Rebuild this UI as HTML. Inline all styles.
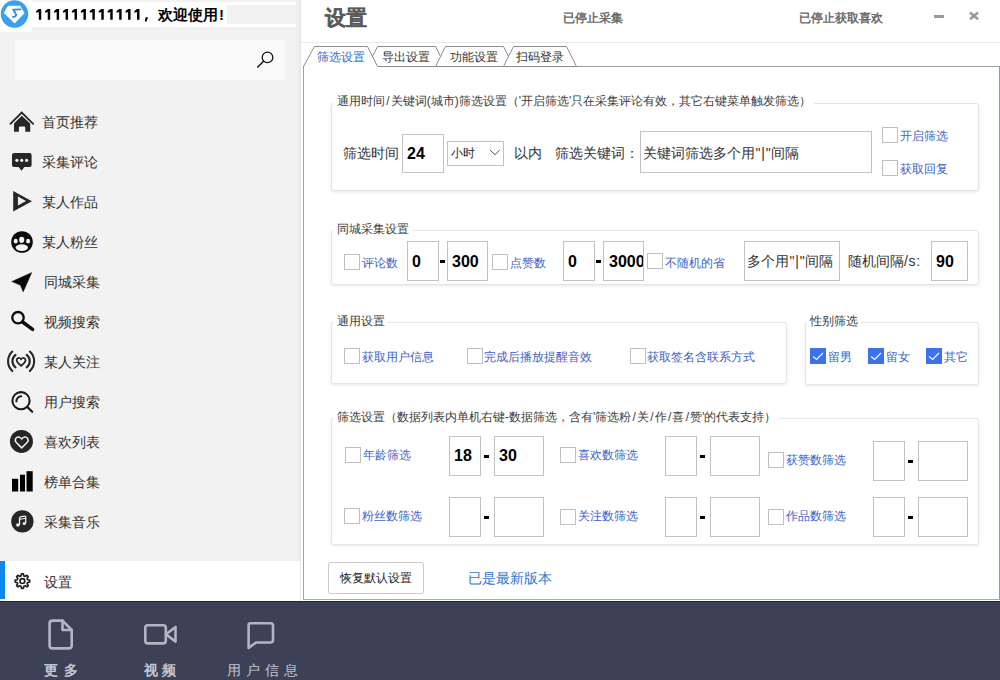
<!DOCTYPE html>
<html><head><meta charset="utf-8">
<style>
*{margin:0;padding:0;box-sizing:border-box}
html,body{width:1000px;height:680px;overflow:hidden;background:#fff;font-family:"Liberation Sans",sans-serif;}
.a{position:absolute}
.t{position:absolute;white-space:nowrap;line-height:1}
#side{position:absolute;left:0;top:0;width:300px;height:601px;background:#f2f2f2}
#sideline{position:absolute;left:300px;top:0;width:1px;height:601px;background:#e4e4e4}
.mi{position:absolute;left:0;width:300px;height:40px}
.mt{position:absolute;font-size:14px;color:#333;line-height:14px;white-space:nowrap}
#bottom{position:absolute;left:0;top:601px;width:1000px;height:79px;background:#3d4156}
.bt{position:absolute;font-size:14px;color:#c4c6d0;line-height:14px;white-space:nowrap;font-weight:bold}
.sec{position:absolute;border:1px solid #e6e6e6;border-radius:3px;box-shadow:0 1px 3px rgba(0,0,0,0.10);background:#fff}
.st{position:absolute;font-size:12px;color:#3c3c3c;line-height:12px;white-space:nowrap;background:#fff;padding:0 3px}
.lbl{position:absolute;font-size:14px;color:#333;line-height:14px;white-space:nowrap}
.inp{position:absolute;border:1px solid #c2c2c2;background:#fff}
.num{position:absolute;font-size:16px;font-weight:bold;color:#000;line-height:16px;white-space:nowrap}
.cb{position:absolute;width:16px;height:16px;border:1px solid #c0c0c0;background:#fff}
.cbl{position:absolute;font-size:12px;color:#4163c8;line-height:12px;white-space:nowrap;margin-top:1px}
.dash{position:absolute;width:5px;height:2.5px;background:#000}
</style></head><body>
<div id="side"></div>
<div id="sideline"></div>
<div class="a" style="left:295px;top:0px;width:5px;height:561px;background:linear-gradient(to right,rgba(0,0,0,0),rgba(0,0,0,0.025))"></div>
<!-- header band -->
<div class="a" style="left:0;top:0;width:32px;height:32px;background:#fff"></div>
<div class="a" style="left:32px;top:2px;width:264px;height:3px;background:#fff"></div>
<div class="a" style="left:32px;top:24px;width:264px;height:3px;background:#fff"></div>
<div class="a" style="left:32px;top:5px;width:195px;height:19px;background:#fff"></div>
<svg class="a" style="left:0;top:0" width="30" height="30" viewBox="0 0 30 30">
<circle cx="14.5" cy="14" r="13.7" fill="#3aa0ee"/>
<path d="M4.5 12.8 L8.4 6.3 L19.8 6.3 L23.8 13 L14.6 22.6 Z" fill="#fff" stroke="#fff" stroke-width="1.2" stroke-linejoin="round"/>
<path d="M20.6 9.4 L13.2 9.6 L15.6 13.6 Q17 15.6 14.6 16.6 L13 17" fill="none" stroke="#2f8fe0" stroke-width="1.9" stroke-linejoin="round" stroke-linecap="round"/>
</svg>
<svg class="a" style="left:0;top:0" width="160" height="30" viewBox="0 0 160 30"><path d="M38.80 9.05 L41.25 9.05 L41.25 19.8 L38.80 19.8 L38.80 12.1 L36.20 12.7 L36.20 10.9 Z M47.73 9.05 L50.18 9.05 L50.18 19.8 L47.73 19.8 L47.73 12.1 L45.13 12.7 L45.13 10.9 Z M56.66 9.05 L59.11 9.05 L59.11 19.8 L56.66 19.8 L56.66 12.1 L54.06 12.7 L54.06 10.9 Z M65.59 9.05 L68.04 9.05 L68.04 19.8 L65.59 19.8 L65.59 12.1 L62.99 12.7 L62.99 10.9 Z M74.52 9.05 L76.97 9.05 L76.97 19.8 L74.52 19.8 L74.52 12.1 L71.92 12.7 L71.92 10.9 Z M83.45 9.05 L85.90 9.05 L85.90 19.8 L83.45 19.8 L83.45 12.1 L80.85 12.7 L80.85 10.9 Z M92.38 9.05 L94.83 9.05 L94.83 19.8 L92.38 19.8 L92.38 12.1 L89.78 12.7 L89.78 10.9 Z M101.31 9.05 L103.76 9.05 L103.76 19.8 L101.31 19.8 L101.31 12.1 L98.71 12.7 L98.71 10.9 Z M110.24 9.05 L112.69 9.05 L112.69 19.8 L110.24 19.8 L110.24 12.1 L107.64 12.7 L107.64 10.9 Z M119.17 9.05 L121.62 9.05 L121.62 19.8 L119.17 19.8 L119.17 12.1 L116.57 12.7 L116.57 10.9 Z M128.10 9.05 L130.55 9.05 L130.55 19.8 L128.10 19.8 L128.10 12.1 L125.50 12.7 L125.50 10.9 Z M137.03 9.05 L139.48 9.05 L139.48 19.8 L137.03 19.8 L137.03 12.1 L134.43 12.7 L134.43 10.9 Z" fill="#000"/>
<path d="M145.6 17.2 L148 17.2 L146.6 21.6 L144.8 21.6 Z" fill="#000"/></svg>
<div class="t" style="left:158px;top:7px;font-size:15px;font-weight:bold;color:#000">欢迎使用<span style="font-size:15px;margin-left:1px">!</span></div>
<!-- search -->
<div class="a" style="left:15px;top:40px;width:270px;height:40px;background:#fafafa"></div>
<svg class="a" style="left:250px;top:45px" width="30" height="30" viewBox="0 0 30 30">
<circle cx="17.5" cy="12.4" r="5.3" fill="none" stroke="#111" stroke-width="1.3"/>
<line x1="13.8" y1="16.1" x2="7.3" y2="22.6" stroke="#111" stroke-width="1.4"/>
</svg>

<!-- menu icons -->
<svg class="a" style="left:0;top:100px" width="40" height="440" viewBox="0 100 40 440">
<!-- home -->
<path d="M10.4 123.9 L21.7 112.6 L33.2 123.9" fill="none" stroke="#262626" stroke-width="1.8" stroke-linecap="round" stroke-linejoin="miter"/>
<path d="M14 131.8 L14 123.5 L21.7 115.8 L30.2 123.5 L30.2 131.8 L25.3 131.8 L25.3 127.8 Q25.3 126.6 24.1 126.6 L20.1 126.6 Q18.9 126.6 18.9 127.8 L18.9 131.8 Z" fill="#262626"/>
<!-- comment -->
<path d="M14 152.9 L29.6 152.9 Q31.6 152.9 31.6 154.9 L31.6 165.1 Q31.6 167.1 29.6 167.1 L24.4 167.1 L21.5 170.8 L18.6 167.1 L14 167.1 Q12 167.1 12 165.1 L12 154.9 Q12 152.9 14 152.9 Z" fill="#262626"/>
<circle cx="16.9" cy="160.3" r="1.6" fill="#f2f2f2"/><circle cx="21.7" cy="160.3" r="1.6" fill="#f2f2f2"/><circle cx="26.6" cy="160.3" r="1.6" fill="#f2f2f2"/>
<!-- play -->
<path d="M13.2 190.9 L32 201.2 L13.2 211.5 Z M17.9 196.6 L17.9 205.5 L26 201 Z" fill="#262626" fill-rule="evenodd"/>
<!-- paw -->
<circle cx="22" cy="242" r="10.8" fill="#0a0a0a"/>
<ellipse cx="15.7" cy="241.2" rx="2" ry="2.4" fill="#f2f2f2"/><ellipse cx="21.7" cy="239.8" rx="2.6" ry="3.1" fill="#f2f2f2"/><ellipse cx="28.1" cy="241.2" rx="2" ry="2.4" fill="#f2f2f2"/>
<ellipse cx="21.8" cy="247.6" rx="6.2" ry="3.3" fill="#f2f2f2"/>
<!-- nav arrow -->
<path d="M11.7 281.6 L31.8 272.5 L23.2 292 L20.4 285.2 Z" fill="#0a0a0a" stroke="#0a0a0a" stroke-width="0.4" stroke-linejoin="round"/>
<!-- search -->
<circle cx="18" cy="317.7" r="5.7" fill="none" stroke="#0a0a0a" stroke-width="2.3"/>
<line x1="22.6" y1="322" x2="32.6" y2="329.4" stroke="#0a0a0a" stroke-width="3.5" stroke-linecap="round"/>
<!-- broadcast heart -->
<g fill="none" stroke="#262626" stroke-width="2.1" stroke-linecap="round">
<path d="M12.3 351.6 A13.2 13.2 0 0 0 12.3 371"/>
<path d="M29.9 351.6 A13.2 13.2 0 0 1 29.9 371"/>
<path d="M15.5 354.8 A8 8 0 0 0 15.5 367.4"/>
<path d="M26.7 354.8 A8 8 0 0 1 26.7 367.4"/>
</g>
<path d="M21.1 365.9 L17.7 362.6 Q16.2 360.8 16.9 359.1 Q18 357.6 19.6 358 Q20.5 358.3 21.1 359.3 Q21.7 358.3 22.6 358 Q24.2 357.6 25.3 359.1 Q26 360.8 24.5 362.6 Z" fill="none" stroke="#262626" stroke-width="1.8" stroke-linejoin="round"/>
<!-- user search -->
<circle cx="21" cy="400.7" r="8.6" fill="none" stroke="#1a1a1a" stroke-width="2.1"/>
<path d="M16.4 401.4 A5 5 0 0 1 21.2 396.2" fill="none" stroke="#1a1a1a" stroke-width="2" stroke-linecap="round"/>
<line x1="27.4" y1="407.1" x2="32.2" y2="411.8" stroke="#1a1a1a" stroke-width="2.2" stroke-linecap="round"/>
<!-- heart circle -->
<circle cx="21.45" cy="441.45" r="11.5" fill="#262626"/>
<path d="M21.7 447.9 L16.3 442.5 Q14.6 440.6 15.6 438.6 Q17 436.7 19.2 437.1 Q20.6 437.5 21.7 439 Q22.8 437.5 24.2 437.1 Q26.4 436.7 27.8 438.6 Q28.8 440.6 27.1 442.5 Z" fill="none" stroke="#f2f2f2" stroke-width="1.5" stroke-linejoin="round"/>
<!-- bars -->
<rect x="12" y="478.8" width="6.2" height="12.7" fill="#000"/>
<rect x="20" y="474.7" width="5" height="16.8" fill="#000"/>
<rect x="26.5" y="471.2" width="6.2" height="20.3" fill="#000"/>
<!-- music -->
<circle cx="22.35" cy="521.35" r="11.2" fill="#262626"/>
<path d="M19.5 525 L19.5 518.2 Q19.5 517 20.7 516.8 L24.5 516.1 Q25.7 515.9 25.7 517.1 L25.7 523.6" fill="none" stroke="#f2f2f2" stroke-width="1.3"/>
<path d="M19.5 519.4 L25.7 518.3" fill="none" stroke="#f2f2f2" stroke-width="1"/>
<circle cx="17.9" cy="525" r="1.8" fill="#f2f2f2"/><circle cx="24.2" cy="523.6" r="1.6" fill="#f2f2f2"/>
</svg>
<div class="mt" style="left:42px;top:115px">首页推荐</div>
<div class="mt" style="left:42px;top:155px">采集评论</div>
<div class="mt" style="left:42px;top:195px">某人作品</div>
<div class="mt" style="left:42px;top:235px">某人粉丝</div>
<div class="mt" style="left:44px;top:275px">同城采集</div>
<div class="mt" style="left:44px;top:315px">视频搜索</div>
<div class="mt" style="left:44px;top:355px">某人关注</div>
<div class="mt" style="left:44px;top:395px">用户搜索</div>
<div class="mt" style="left:44px;top:435px">喜欢列表</div>
<div class="mt" style="left:44px;top:475px">榜单合集</div>
<div class="mt" style="left:44px;top:515px">采集音乐</div>
<!-- settings active -->
<div class="a" style="left:0;top:561px;width:300px;height:40px;background:#fff"></div>
<div class="a" style="left:0;top:561px;width:5px;height:38px;background:#0f87f0"></div>
<svg class="a" style="left:0;top:560px" width="40" height="40" viewBox="0 560 40 40">
<path d="M29.64 580.13 L29.64 582.07 L27.62 582.48 L27.07 583.81 L28.20 585.53 L26.83 586.90 L25.11 585.77 L23.78 586.32 L23.37 588.34 L21.43 588.34 L21.02 586.32 L19.69 585.77 L17.97 586.90 L16.60 585.53 L17.73 583.81 L17.18 582.48 L15.16 582.07 L15.16 580.13 L17.18 579.72 L17.73 578.39 L16.60 576.67 L17.97 575.30 L19.69 576.43 L21.02 575.88 L21.43 573.86 L23.37 573.86 L23.78 575.88 L25.11 576.43 L26.83 575.30 L28.20 576.67 L27.07 578.39 L27.62 579.72 Z" fill="none" stroke="#222" stroke-width="1.7" stroke-linejoin="round"/>
<circle cx="22.4" cy="581.1" r="2.4" fill="none" stroke="#222" stroke-width="1.7"/>
</svg>
<div class="mt" style="left:44px;top:575px">设置</div>


<!-- right header -->
<div class="a" style="left:301px;top:42px;width:699px;height:1px;background:#ebebeb"></div>
<div class="t" style="left:325px;top:7px;font-size:21px;font-weight:bold;color:#5a5a5a;-webkit-text-stroke:0.2px #5a5a5a">设置</div>
<div class="t" style="left:563px;top:12px;font-size:12px;font-weight:bold;color:#6a6a6a">已停止采集</div>
<div class="t" style="left:799px;top:12px;font-size:12px;font-weight:bold;color:#6a6a6a">已停止获取喜欢</div>
<div class="a" style="left:934px;top:15px;width:10px;height:3px;background:#9a9a9a"></div>
<svg class="a" style="left:966px;top:9px" width="16" height="14" viewBox="0 0 16 14">
<path d="M3.9 3.5 L12.1 10.2 M12.1 3.5 L3.9 10.2" stroke="#9a9a9a" stroke-width="2.4"/>
</svg>
<!-- content box -->
<div class="a" style="left:303px;top:66px;width:697px;height:534px;border:1px solid;border-color:#999da1 #8f98a4 #a6aaae #a0a4a8;background:#fff"></div>
<!-- tabs -->
<svg class="a" style="left:300px;top:40px" width="300" height="30" viewBox="300 40 300 30">
<g fill="#fff" stroke="#8a8e92" stroke-width="1">
<path d="M367.5 66.5 L377.5 46.5 L435.5 46.5 L445.5 66.5 Z"/>
<path d="M435.5 66.5 L445.5 46.5 L503.5 46.5 L513.5 66.5 Z"/>
<path d="M503.5 66.5 L513.5 46.5 L566.5 46.5 L576.5 66.5 Z"/>
</g>
<path d="M304 67.4 L304 66 L314.5 46.5 L367.5 46.5 L378 67.4 Z" fill="#fff" stroke="none"/>
<path d="M303.5 68 L303.5 66.5 L314.5 46.5 L367.5 46.5 L377.5 66.5" fill="none" stroke="#8a8e92" stroke-width="1"/>
</svg>
<div class="t" style="left:317px;top:51px;font-size:12px;color:#2a70c4">筛选设置</div>
<div class="t" style="left:382px;top:51px;font-size:12px;color:#333">导出设置</div>
<div class="t" style="left:450px;top:51px;font-size:12px;color:#333">功能设置</div>
<div class="t" style="left:516px;top:51px;font-size:12px;color:#333">扫码登录</div>

<!-- section 1 -->
<div class="sec" style="left:331px;top:103px;width:648px;height:88px"></div>
<div class="st" style="left:334px;top:95px">通用时间<span style="margin:0 1.2px">/</span>关键词(城市)筛选设置（'开启筛选'只在采集评论有效，其它右键菜单触发筛选）</div>
<div class="lbl" style="left:343px;top:146px">筛选时间</div>
<div class="inp" style="left:402px;top:134px;width:42px;height:39px"></div>
<div class="num" style="left:407px;top:146px">24</div>
<div class="inp" style="left:447px;top:141px;width:57px;height:25px"></div>
<div class="lbl" style="left:451px;top:146px;font-size:12px;color:#222">小时</div>
<svg class="a" style="left:488px;top:147px" width="14" height="10" viewBox="0 0 14 10"><path d="M2 3 L7 7.7 L11.8 3" fill="none" stroke="#555" stroke-width="1"/></svg>
<div class="lbl" style="left:514px;top:146px">以内</div>
<div class="lbl" style="left:555px;top:146px">筛选关键词：</div>
<div class="inp" style="left:640px;top:131px;width:232px;height:42px"></div>
<div class="lbl" style="left:643px;top:146px">关键词筛选多个用<span style="letter-spacing:0.8px;margin-left:0.5px">"|"</span>间隔</div>
<div class="cb" style="left:882px;top:127px"></div>
<div class="cbl" style="left:900px;top:129px">开启筛选</div>
<div class="cb" style="left:882px;top:160px"></div>
<div class="cbl" style="left:900px;top:162px">获取回复</div>

<!-- section 2 -->
<div class="sec" style="left:331px;top:230px;width:648px;height:55px"></div>
<div class="st" style="left:334px;top:223px">同城采集设置</div>
<div class="cb" style="left:344px;top:254px"></div>
<div class="cbl" style="left:362px;top:256px">评论数</div>
<div class="inp" style="left:407px;top:241px;width:32px;height:40px"></div>
<div class="num" style="left:412px;top:254px">0</div>
<div class="dash" style="left:440px;top:260px"></div>
<div class="inp" style="left:447px;top:241px;width:41px;height:40px"></div>
<div class="num" style="left:452px;top:254px">300</div>
<div class="cb" style="left:492px;top:254px"></div>
<div class="cbl" style="left:510px;top:256px">点赞数</div>
<div class="inp" style="left:563px;top:241px;width:32px;height:40px"></div>
<div class="num" style="left:568px;top:254px">0</div>
<div class="dash" style="left:596px;top:260px"></div>
<div class="inp" style="left:603px;top:241px;width:41px;height:40px;overflow:hidden"><div class="num" style="left:5px;top:12px">3000</div></div>
<div class="cb" style="left:647px;top:253px"></div>
<div class="cbl" style="left:665px;top:256px">不随机的省</div>
<div class="inp" style="left:744px;top:241px;width:96px;height:40px"></div>
<div class="lbl" style="left:747px;top:254px">多个用<span style="letter-spacing:0.8px;margin-left:0.5px">"|"</span>间隔</div>
<div class="lbl" style="left:848px;top:254px">随机间隔<span style="letter-spacing:0.7px">/s:</span></div>
<div class="inp" style="left:931px;top:241px;width:37px;height:40px"></div>
<div class="num" style="left:936px;top:254px">90</div>

<!-- section 3 -->
<div class="sec" style="left:331px;top:322px;width:456px;height:62px"></div>
<div class="st" style="left:334px;top:315px">通用设置</div>
<div class="cb" style="left:344px;top:348px"></div>
<div class="cbl" style="left:362px;top:350px">获取用户信息</div>
<div class="cb" style="left:467px;top:348px"></div>
<div class="cbl" style="left:484px;top:350px">完成后播放提醒音效</div>
<div class="cb" style="left:630px;top:348px"></div>
<div class="cbl" style="left:647px;top:350px">获取签名含联系方式</div>

<div class="sec" style="left:805px;top:322px;width:174px;height:63px"></div>
<div class="st" style="left:807px;top:315px">性别筛选</div>
<svg class="a" style="left:810px;top:348px" width="16" height="16" viewBox="0 0 16 16"><rect width="16" height="16" fill="#3b74e6"/><path d="M3.2 8.5 L6.6 11.5 L13 5" fill="none" stroke="#fff" stroke-width="1.15"/></svg>
<div class="cbl" style="left:828px;top:350px">留男</div>
<svg class="a" style="left:868px;top:348px" width="16" height="16" viewBox="0 0 16 16"><rect width="16" height="16" fill="#3b74e6"/><path d="M3.2 8.5 L6.6 11.5 L13 5" fill="none" stroke="#fff" stroke-width="1.15"/></svg>
<div class="cbl" style="left:886px;top:350px">留女</div>
<svg class="a" style="left:926px;top:348px" width="16" height="16" viewBox="0 0 16 16"><rect width="16" height="16" fill="#3b74e6"/><path d="M3.2 8.5 L6.6 11.5 L13 5" fill="none" stroke="#fff" stroke-width="1.15"/></svg>
<div class="cbl" style="left:944px;top:350px">其它</div>

<!-- section 4 -->
<div class="sec" style="left:331px;top:418px;width:648px;height:127px"></div>
<div class="st" style="left:334px;top:411px">筛选设置（数据列表内单机右键-数据筛选，含有'筛选粉<span style="margin:0 1.2px">/</span>关<span style="margin:0 1.2px">/</span>作<span style="margin:0 1.2px">/</span>喜<span style="margin:0 1.2px">/</span>赞'的代表支持）</div>
<div class="cb" style="left:345px;top:447px"></div>
<div class="cbl" style="left:363px;top:448px">年龄筛选</div>
<div class="inp" style="left:449px;top:436px;width:32px;height:40px"></div>
<div class="num" style="left:454px;top:448px">18</div>
<div class="dash" style="left:484px;top:455px"></div>
<div class="inp" style="left:494px;top:436px;width:50px;height:40px"></div>
<div class="num" style="left:499px;top:448px">30</div>
<div class="cb" style="left:560px;top:447px"></div>
<div class="cbl" style="left:578px;top:448px">喜欢数筛选</div>
<div class="inp" style="left:665px;top:436px;width:32px;height:40px"></div>
<div class="dash" style="left:700px;top:455px"></div>
<div class="inp" style="left:710px;top:436px;width:50px;height:40px"></div>
<div class="cb" style="left:768px;top:452px"></div>
<div class="cbl" style="left:786px;top:453px">获赞数筛选</div>
<div class="inp" style="left:873px;top:441px;width:32px;height:40px"></div>
<div class="dash" style="left:908px;top:460px"></div>
<div class="inp" style="left:918px;top:441px;width:50px;height:40px"></div>

<div class="cb" style="left:344px;top:508px"></div>
<div class="cbl" style="left:362px;top:509px">粉丝数筛选</div>
<div class="inp" style="left:449px;top:497px;width:32px;height:40px"></div>
<div class="dash" style="left:484px;top:516px"></div>
<div class="inp" style="left:494px;top:497px;width:50px;height:40px"></div>
<div class="cb" style="left:560px;top:509px"></div>
<div class="cbl" style="left:578px;top:509px">关注数筛选</div>
<div class="inp" style="left:665px;top:497px;width:32px;height:40px"></div>
<div class="dash" style="left:700px;top:516px"></div>
<div class="inp" style="left:710px;top:497px;width:50px;height:40px"></div>
<div class="cb" style="left:768px;top:509px"></div>
<div class="cbl" style="left:786px;top:509px">作品数筛选</div>
<div class="inp" style="left:873px;top:497px;width:32px;height:40px"></div>
<div class="dash" style="left:908px;top:516px"></div>
<div class="inp" style="left:918px;top:497px;width:50px;height:40px"></div>

<!-- bottom buttons -->
<div class="a" style="left:328px;top:562px;width:96px;height:32px;border:1px solid #c9c9c9;border-radius:3px;background:#fff"></div>
<div class="t" style="left:340px;top:572px;font-size:12px;color:#222">恢复默认设置</div>
<div class="t" style="left:468px;top:571px;font-size:14px;color:#2b76cc">已是最新版本</div>

<!-- bottom bar -->
<div id="bottom"></div>
<div class="a" style="left:0;top:601px;width:1000px;height:1px;background:#23263a"></div>
<svg class="a" style="left:0;top:601px" width="320" height="79" viewBox="0 601 320 79">
<g fill="none" stroke="#b3b5c2" stroke-width="2.6" stroke-linejoin="round" stroke-linecap="round">
<path d="M52.5 620.6 L62.5 620.6 L71.7 630 L71.7 645.5 Q71.7 648.4 68.8 648.4 L52.5 648.4 Q49.6 648.4 49.6 645.5 L49.6 623.5 Q49.6 620.6 52.5 620.6 Z"/>
<path d="M62.5 620.6 L62.5 630 L71.7 630"/>
<rect x="145.3" y="625.2" width="20.5" height="18.2" rx="2.6"/>
<path d="M166 634.3 L175.5 627 L175.5 641.6 Z"/>
<path d="M250.5 623.3 L270.5 623.3 Q273 623.3 273 625.8 L273 640 Q273 642.5 270.5 642.5 L256 642.5 L248.6 648 L248.6 625.2 Q248.6 623.3 250.5 623.3 Z"/>
</g>
</svg>
<div class="bt" style="left:44px;top:663px;letter-spacing:6px">更多</div>
<div class="bt" style="left:144px;top:663px;letter-spacing:4px">视频</div>
<div class="bt" style="left:227px;top:663px;letter-spacing:5px;font-weight:normal">用户信息</div>

</body></html>
